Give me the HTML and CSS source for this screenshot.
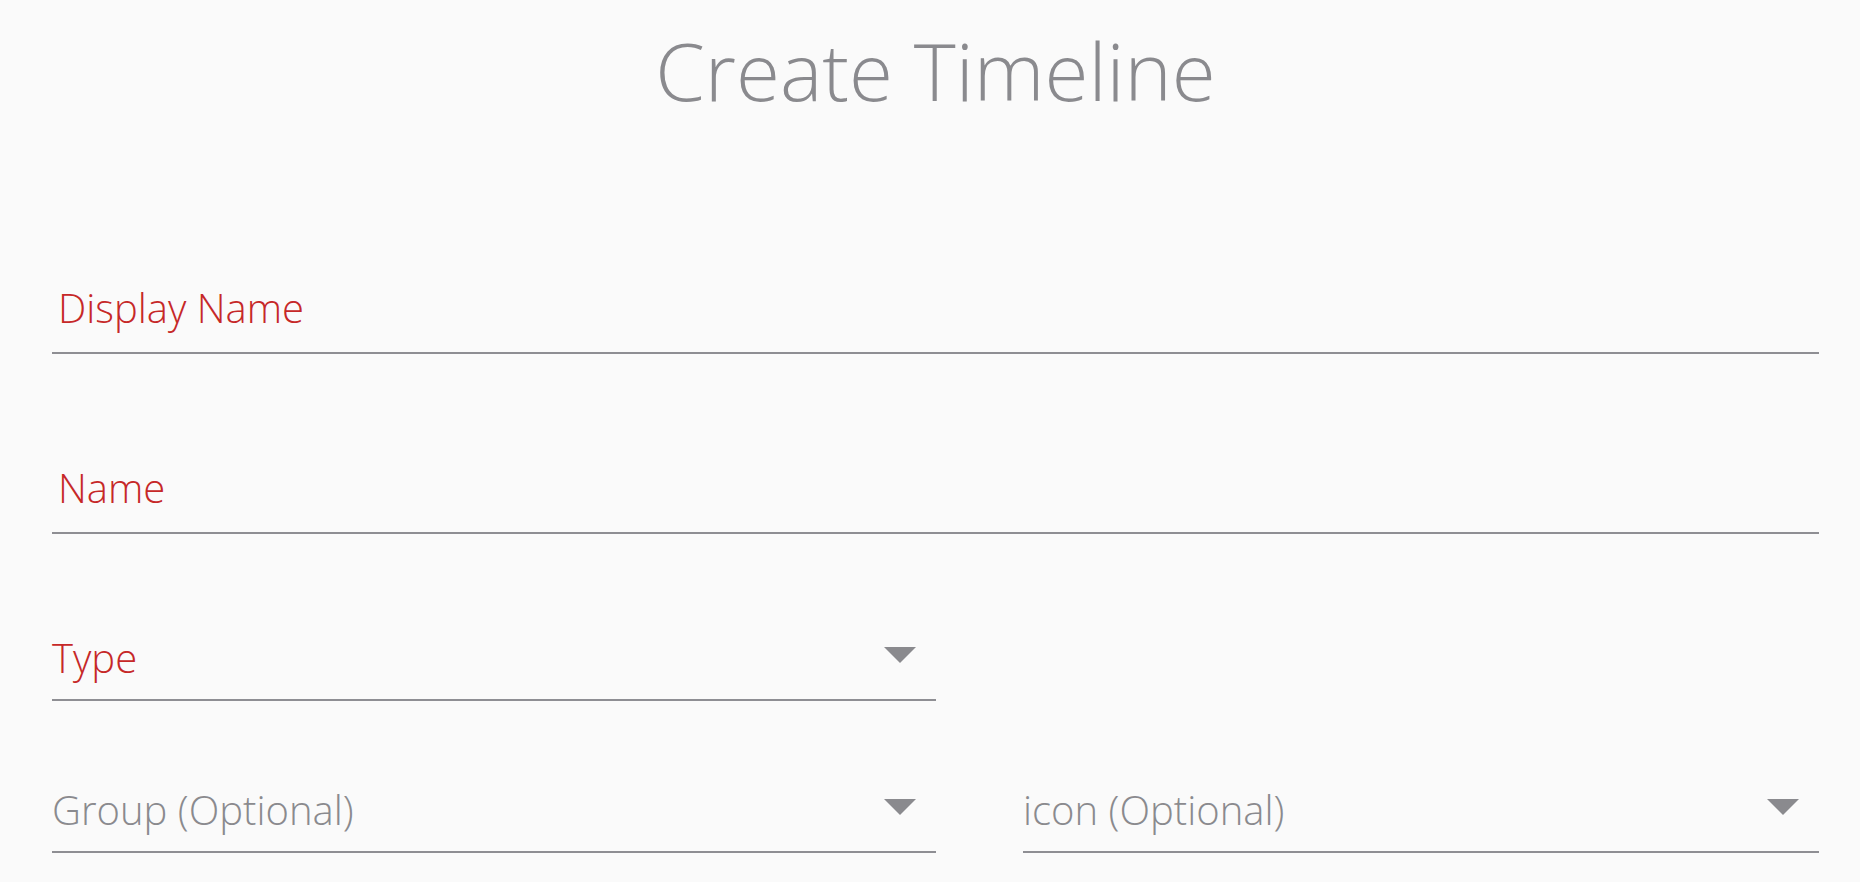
FILE: index.html
```html
<!DOCTYPE html>
<html lang="en">
<head>
  <meta charset="UTF-8" />
  <meta name="viewport" content="width=device-width, initial-scale=1.0"/>
  <title>Create Timeline</title>
  <link rel="stylesheet" href="styles.css">
</head>
<body>
  <div class="page">
    <h1 class="title">Create Timeline</h1>

    <form class="timeline-form">
      <div class="field text-field first">
        <span class="label required">Display Name</span>
      </div>

      <div class="field text-field second">
        <span class="label required">Name</span>
      </div>

      <div class="select-row type-row">
        <div class="field select-field">
          <span class="label required">Type</span>
          <span class="arrow"></span>
        </div>
      </div>

      <div class="select-row optional-row">
        <div class="field select-field">
          <span class="label">Group (Optional)</span>
          <span class="arrow"></span>
        </div>
        <div class="field select-field">
          <span class="label">icon (Optional)</span>
          <span class="arrow"></span>
        </div>
      </div>
    </form>
  </div>
</body>
</html>
```

FILE: styles.css
```css
body {
  margin: 0;
  background: #fafafa;
  font-family: "Open Sans", "Noto Sans", sans-serif;
  font-weight: 300;
  color: #8a8a8e;
}
.page {
  padding: 0 41px 0 52px;
}
.title {
  margin: 22px 0 0;
  font-size: 80px;
  font-weight: 300;
  line-height: 96px;
  text-align: center;
  color: #8a8a8e;
}
.timeline-form {
  display: flex;
  flex-direction: column;
}
.field {
  display: flex;
  align-items: flex-start;
  border-bottom: 2px solid #8e8e93;
}
.label {
  flex: 1;
  font-size: 40px;
  line-height: 48px;
  color: #8a8a8e;
  white-space: nowrap;
}
.label.required {
  color: #c62828;
}
.text-field {
  padding: 0 0 20px 6px;
}
.text-field.first {
  margin-top: 166px;
}
.text-field.second {
  margin-top: 110px;
}
.select-row {
  display: grid;
  grid-template-columns: 884px 796px;
  column-gap: 87px;
}
.type-row {
  margin-top: 100px;
}
.optional-row {
  margin-top: 85px;
}
.select-field {
  padding-bottom: 17px;
}
.arrow {
  width: 0;
  height: 0;
  margin: 13px 20px 0 0;
  border-left: 16px solid transparent;
  border-right: 16px solid transparent;
  border-top: 16px solid #8a8a8e;
}
```
